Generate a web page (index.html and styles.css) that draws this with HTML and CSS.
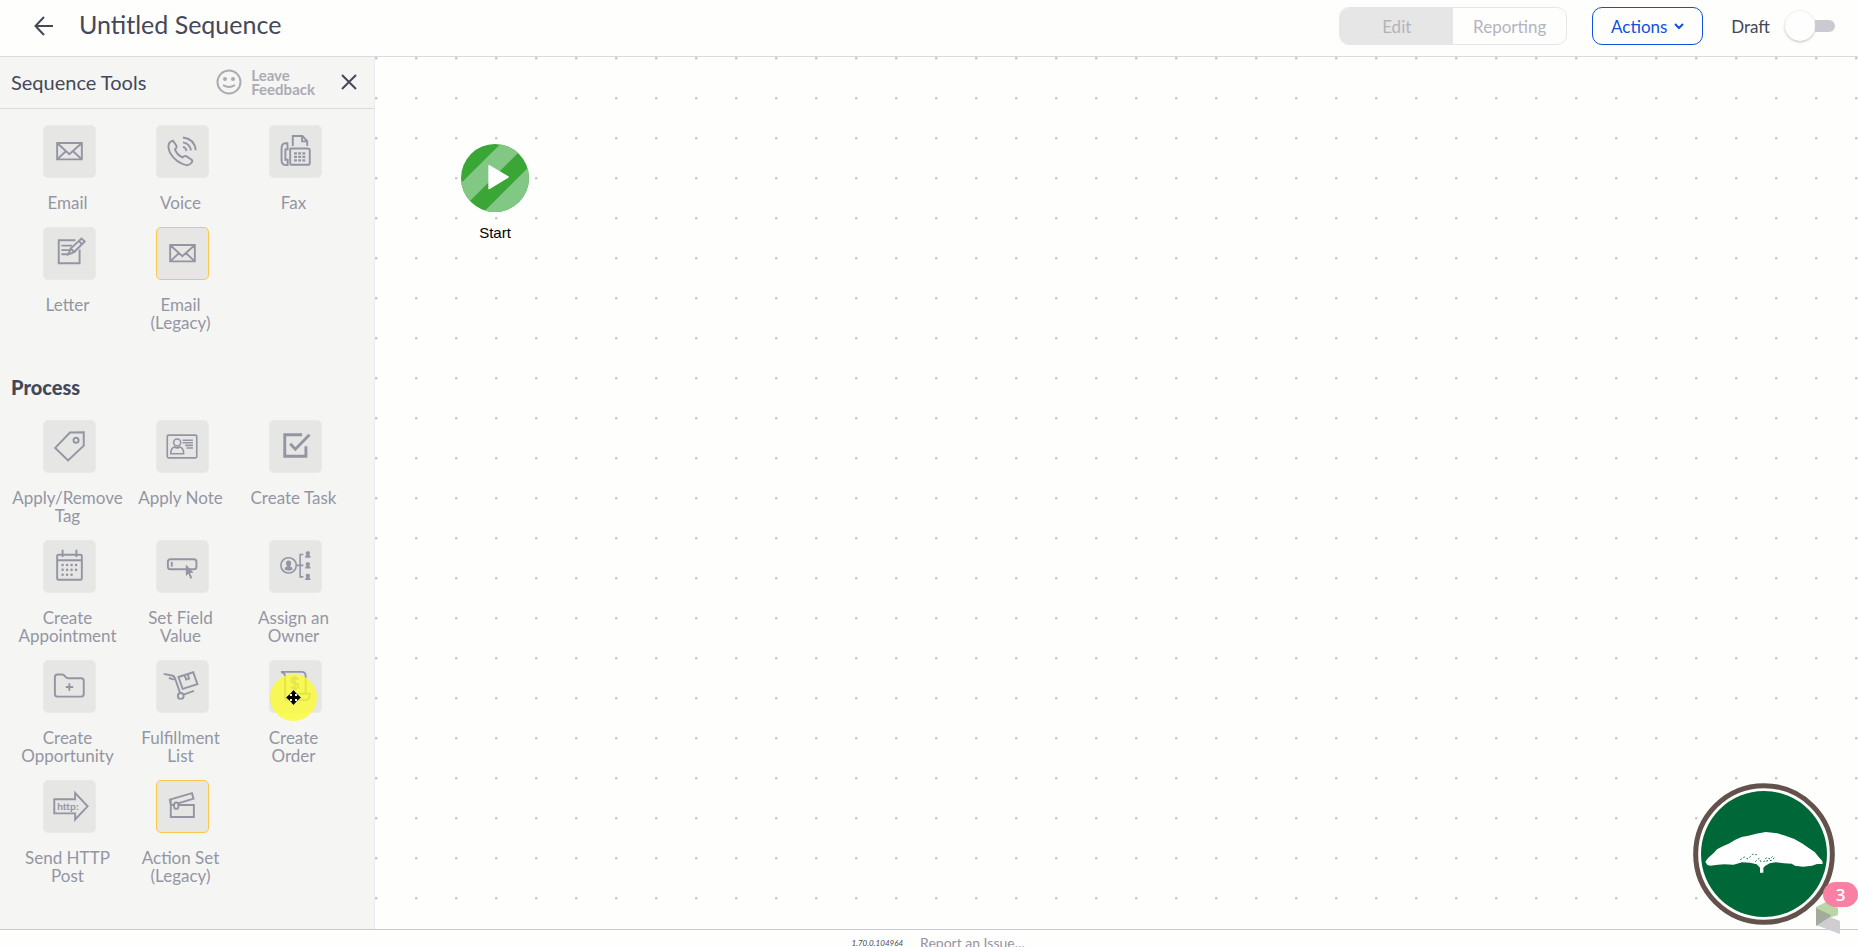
FILE: index.html
```html
<!DOCTYPE html>
<html lang="en">
<head>
    <meta charset="UTF-8">
    <meta name="viewport" content="width=device-width, initial-scale=1.0">
    <title>Untitled Sequence</title>
    <link rel="stylesheet" href="styles.css">
</head>
<body>
    <header class="topbar">
        <button type="button" class="icon-button" aria-label="Back">
            <svg width="20" height="20" viewBox="0 0 20 20"><path d="M19 10H2M10 1L1.500 10L10 19"/></svg>
        </button>
        <h1 class="title">Untitled Sequence</h1>
        <div class="mode-switch">
            <button type="button" class="mode active" disabled>Edit</button>
            <button type="button" class="mode" disabled>Reporting</button>
        </div>
        <button type="button" class="actions">Actions
            <svg width="10" height="7" viewBox="0 0 10 7"><path d="M1 1L5 5L9 1"/></svg>
        </button>
        <label class="publish" for="publish">Draft
            <input type="checkbox" id="publish" class="toggle">
        </label>
    </header>

    <main class="workspace">
        <aside class="sidebar">
            <div class="tools-header">
                <h2 class="tools-title">Sequence Tools</h2>
                <a href="#" class="feedback">
                    <svg width="26" height="26" viewBox="0 0 26 26">
                        <circle cx="13" cy="13" r="11.500"/>
                        <path d="M7 16Q13 20 19 16"/>
                        <circle class="fill" cx="9" cy="10" r="2"/>
                        <circle class="fill" cx="17" cy="10" r="2"/>
                    </svg>
                    <span>Leave<br>Feedback</span>
                </a>
                <button type="button" class="icon-button" aria-label="Close">
                    <svg width="16" height="16" viewBox="0 0 16 16"><path d="M1 1L15 15M15 1L1 15"/></svg>
                </button>
            </div>

            <div class="tools">
                <button type="button" class="tool">
                    <span class="tile">
                        <svg viewBox="0 0 159 156"><path d="M41 53H118V104H41ZM41 53L79 88L118 53M41 104L69 78M118 104L90 78"/></svg>
                    </span>
                    <span class="tool-name">Email</span>
                </button>
                <button type="button" class="tool">
                    <span class="tile">
                        <svg viewBox="0 0 159 156">
                            <path d="M50 46L61 62Q63 67 56 73Q62 90 79 98Q86 92 91 94L108 105Q112 109 108 114Q101 124 91 122Q60 115 42 86Q33 68 37 56Q41 47 50 46Z"/>
                            <path d="M81 36Q116 40 121 75M81 51Q102 54 106 76M81 65Q90 66 92 78"/>
                        </svg>
                    </span>
                    <span class="tool-name">Voice</span>
                </button>
                <button type="button" class="tool">
                    <span class="tile">
                        <svg viewBox="0 0 159 156">
                            <path d="M71 62V31H101L116 47V62M100 32V48H115"/>
                            <path d="M62 70H118Q124 70 124 76V115Q124 121 118 121H67Q63 121 63 116V70"/>
                            <path d="M54 54H48Q36 55 36 70V106Q36 121 48 122H55V105H48V73H55Z"/>
                            <path class="keys" d="M75 85H111M75 96H111M75 107H111"/>
                        </svg>
                    </span>
                    <span class="tool-name">Fax</span>
                </button>
                <button type="button" class="tool">
                    <span class="tile">
                        <svg viewBox="0 0 159 156">
                            <path d="M98 38H46V110H111V67M54 55H87M54 69H80M54 82H76"/>
                            <path d="M76 82L83 64L117 33L127 42L94 75ZM108 40L118 50M83 64L94 75"/>
                        </svg>
                    </span>
                    <span class="tool-name">Letter</span>
                </button>
                <button type="button" class="tool">
                    <span class="tile legacy">
                        <svg viewBox="0 0 159 156"><path d="M41 53H118V104H41ZM41 53L79 88L118 53M41 104L69 78M118 104L90 78"/></svg>
                    </span>
                    <span class="tool-name">Email<br>(Legacy)</span>
                </button>
            </div>

            <h3 class="section-title">Process</h3>
            <div class="tools">
                <button type="button" class="tool">
                    <span class="tile">
                        <svg viewBox="0 0 159 156"><path d="M81 36L124 35V77L75 123L35 84Z"/><circle cx="100" cy="60" r="8"/></svg>
                    </span>
                    <span class="tool-name">Apply/Remove<br>Tag</span>
                </button>
                <button type="button" class="tool">
                    <span class="tile">
                        <svg viewBox="0 0 159 156" class="thin">
                            <rect x="32" y="44" width="92" height="71" rx="4"/>
                            <circle cx="63" cy="67" r="11"/>
                            <path d="M43 102Q43 84 54 81Q63 87 72 81Q83 84 83 102ZM80 60H112M80 68H112M88 76H112M92 84H112"/>
                        </svg>
                    </span>
                    <span class="tool-name">Apply Note</span>
                </button>
                <button type="button" class="tool">
                    <span class="tile">
                        <svg viewBox="0 0 159 156" class="thick"><path d="M100 43H46V110H112V79M63 71L79 88L123 43"/></svg>
                    </span>
                    <span class="tool-name">Create Task</span>
                </button>
                <button type="button" class="tool">
                    <span class="tile">
                        <svg viewBox="0 0 159 156">
                            <rect x="41" y="43" width="77" height="78" rx="4"/>
                            <path d="M41 60H118M58 27V50M101 27V50"/>
                            <path class="dots" d="M58 75H102M58 90H102M58 105H88"/>
                        </svg>
                    </span>
                    <span class="tool-name">Create<br>Appointment</span>
                </button>
                <button type="button" class="tool">
                    <span class="tile">
                        <svg viewBox="0 0 159 156">
                            <rect x="34" y="57" width="89" height="31" rx="8"/>
                            <path d="M46 65V80"/>
                            <path class="fill" d="M90 73V109L98 102L104 118L110 115L103 100L114 99Z"/>
                        </svg>
                    </span>
                    <span class="tool-name">Set Field<br>Value</span>
                </button>
                <button type="button" class="tool">
                    <span class="tile">
                        <svg viewBox="0 0 159 156" class="thin">
                            <circle cx="58" cy="76" r="24"/>
                            <path d="M82 76H104M104 42H94V112H104"/>
                            <path class="fill" d="M58 61C51 61 50 66 50 70Q50 75 54 79Q46 81 45 89Q58 96 71 89Q70 81 62 79Q66 75 66 70C66 66 65 61 58 61Z"/>
                            <path class="fill" d="M118 32a6 6 0 0 1 4 11l4 4v5h-16v-5l4-4a6 6 0 0 1 4-11zM118 66a6 6 0 0 1 4 11l4 4v5h-16v-5l4-4a6 6 0 0 1 4-11zM118 102a6 6 0 0 1 4 11l4 4v5h-16v-5l4-4a6 6 0 0 1 4-11z"/>
                        </svg>
                    </span>
                    <span class="tool-name">Assign an<br>Owner</span>
                </button>
                <button type="button" class="tool">
                    <span class="tile">
                        <svg viewBox="0 0 159 156"><path d="M34 50Q34 42 42 42H57Q61 42 64 46L69 51Q72 54 77 54H116Q124 54 124 62V102Q124 111 116 111H42Q34 111 34 102ZM68 81H91M79 69V93"/></svg>
                    </span>
                    <span class="tool-name">Create<br>Opportunity</span>
                </button>
                <button type="button" class="tool">
                    <span class="tile">
                        <svg viewBox="0 0 159 156">
                            <path d="M21 40L49 46Q54 48 56 53L72 100M37 53L54 58M83 105L115 93"/>
                            <circle cx="74" cy="109" r="9"/>
                            <path d="M67 50L113 35L126 72L80 87ZM86 45L91 58L100 55L96 41"/>
                        </svg>
                    </span>
                    <span class="tool-name">Fulfillment<br>List</span>
                </button>
                <button type="button" class="tool">
                    <span class="tile">
                        <svg viewBox="0 0 159 156">
                            <path d="M34 34H99Q111 34 111 46V101M36 35Q47 37 47 48V112Q47 122 58 122H112Q124 122 124 102H79V109Q79 121 68 121"/>
                            <path d="M88 58Q84 52 77 52Q67 53 67 60Q67 67 77 69Q88 71 88 78Q87 86 77 86Q69 86 66 80M77 47V91"/>
                        </svg>
                        <span class="pointer">
                            <svg width="17" height="17" viewBox="0 0 17 17"><path d="M8.500 1L12 5H10V7H12V5L16 8.500L12 12V10H10V12H12L8.500 16L5 12H7V10H5V12L1 8.500L5 5V7H7V5H5Z"/></svg>
                        </span>
                    </span>
                    <span class="tool-name">Create<br>Order</span>
                </button>
                <button type="button" class="tool">
                    <span class="tile">
                        <svg viewBox="0 0 159 156"><path d="M32 57H97V37L136 79L97 120V101H32Z"/><text x="41" y="89">http:</text></svg>
                    </span>
                    <span class="tool-name">Send HTTP<br>Post</span>
                </button>
                <button type="button" class="tool">
                    <span class="tile legacy">
                        <svg viewBox="0 0 159 156">
                            <path d="M68 75H115V112H43V58M53 75H43L40 58L109 38L114 55L66 70"/>
                            <ellipse cx="60" cy="77" rx="7" ry="10"/>
                        </svg>
                    </span>
                    <span class="tool-name">Action Set<br>(Legacy)</span>
                </button>
            </div>
        </aside>

        <section class="canvas">
            <div class="node">
                <svg width="68" height="68" viewBox="0 0 204 204">
                    <clipPath id="disc"><circle cx="102" cy="102" r="102"/></clipPath>
                    <g clip-path="url(#disc)">
                        <path fill="#39a635" d="M0 0H204V204H0Z"/>
                        <path fill="#83c785" d="M118 0H198L0 198V118ZM272 0V272H0Z"/>
                    </g>
                    <path fill="#fff" stroke="#fff" stroke-width="4" stroke-linejoin="round" d="M84 65L142 99L84 134Z"/>
                </svg>
                <span>Start</span>
            </div>
            <div class="brand">
                <svg width="142" height="142" viewBox="0 0 426 426">
                    <circle cx="213" cy="213" r="205" fill="#fff" stroke="#62524b" stroke-width="15"/>
                    <circle cx="213" cy="213" r="189" fill="#006838"/>
                    <path fill="#fff" d="M37 236L46 224L63 209L72 199L91 189L107 182L127 170L146 162L166 158L190 152L218 147L253 151L277 158L304 168L329 182L346 194L365 207L377 222L388 234L389 243L372 243L357 248L330 251L306 248L296 242L273 241L248 238L230 241L216 249L211 255V269H201V254L191 244L171 239L147 238L132 242L121 245L94 244L75 245L52 248L43 246Z"/>
                    <path fill="none" stroke="#006838" stroke-width="3" stroke-dasharray="5 6" d="M142 230L154 222L165 228L178 214L191 215M187 236L198 226L205 238M212 237L220 224L232 228L241 218M220 234L236 232L248 221"/>
                </svg>
            </div>
            <div class="help">
                <svg width="24" height="32" viewBox="0 0 24 32">
                    <path fill="#b8d7a5" d="M0 5L10 0L22 6V13L13 16L0 9Z"/>
                    <path fill="#ceced0" d="M0 23L14 15L24 19V32Z"/>
                    <path fill="#a1ad9a" d="M0 6L15 13L14 15L0 24Z"/>
                </svg>
                <span class="count">3</span>
            </div>
        </section>
    </main>

    <footer class="footer">
        <span class="version">1.70.0.104964</span>
        <a href="#" class="report">Report an Issue...</a>
    </footer>
</body>
</html>
```
FILE: styles.css
```css
* {
    box-sizing: border-box;
}
body {
    margin: 0;
    height: 100vh;
    display: flex;
    flex-direction: column;
    overflow: hidden;
    background-color: #fefefd;
    color: #444859;
    font-family: Lato, "Liberation Sans", sans-serif;
    font-size: 17px;
}
button {
    font: inherit;
    color: inherit;
    background: none;
    border: 0;
    padding: 0;
}
a {
    color: inherit;
    text-decoration: none;
}
svg {
    display: block;
    fill: none;
    stroke: currentColor;
    stroke-width: 2;
}
h1, h2, h3 {
    margin: 0;
    font-weight: 400;
}

/* top bar */
.topbar {
    flex: none;
    display: flex;
    align-items: center;
    height: 57px;
    padding: 0 23px 4px 34px;
    border-bottom: 1px solid #dadae2;
}
.title {
    margin: 0 auto 0 25px;
    padding-bottom: 4px;
    font-size: 25px;
    line-height: 30px;
}
.mode-switch {
    display: flex;
    width: 228px;
    height: 38px;
    border: 1px solid #e6e6e8;
    border-radius: 10px;
    overflow: hidden;
}
.mode {
    flex: 1;
    color: #b4b4bd;
}
.mode.active {
    background-color: #e6e6e6;
}
.actions {
    display: flex;
    align-items: center;
    justify-content: center;
    gap: 7px;
    width: 111px;
    height: 38px;
    margin: 0 28px 0 25px;
    border: 1px solid #1150dc;
    border-radius: 10px;
    color: #1150dc;
}
.publish {
    display: flex;
    align-items: center;
    gap: 15px;
}
.toggle {
    appearance: none;
    display: flex;
    align-items: center;
    margin: 0;
}
.toggle::before {
    content: "";
    width: 30px;
    height: 30px;
    border-radius: 50%;
    background-color: #fefefe;
    box-shadow: 0 1px 3px rgba(0,0,0,0.25);
}
.toggle::after {
    content: "";
    width: 20px;
    height: 12px;
    border-radius: 0 6px 6px 0;
    background-color: #cacad2;
}

.workspace {
    flex: 1;
    min-height: 0;
    display: flex;
}

/* sidebar */
.sidebar {
    flex: none;
    width: 375px;
    overflow: hidden;
    background-color: #f5f5f4;
    border-right: 1px solid #ebebee;
}
.tools-header {
    display: flex;
    align-items: center;
    height: 52px;
    margin-bottom: 16px;
    padding: 0 17px 1px 11px;
    border-bottom: 1px solid #dadae2;
}
.tools-title {
    flex: 1;
    font-size: 20px;
}
.feedback {
    display: flex;
    align-items: center;
    gap: 9px;
    margin-right: 26px;
    color: #abacb3;
    font-size: 15px;
    font-weight: 700;
    line-height: 14px;
}
.tools {
    display: grid;
    grid-template-columns: repeat(3, 1fr);
    row-gap: 15px;
    margin: 0 24px 0 11px;
}
.tool {
    display: flex;
    flex-direction: column;
    align-items: center;
    gap: 17px;
    color: #9495a3;
    font-size: 17px;
    line-height: 18px;
}
.tile {
    position: relative;
    width: 53px;
    height: 53px;
    margin: 0 0 -1px 4px;
    border: 1px solid #e9e9ed;
    border-radius: 5px;
    background-color: #e6e6e5;
}
.tile.legacy {
    border-color: #fac84a;
}
.tile svg {
    stroke-width: 6;
}
.tile .thin {
    stroke-width: 5;
}
.tile .thick {
    stroke-width: 9;
}
.tile .keys {
    stroke-width: 7;
    stroke-dasharray: 9 4;
}
.tile .dots {
    stroke-width: 8;
    stroke-dasharray: 0 14;
    stroke-linecap: round;
}
.tile .fill,
.fill,
.tile text {
    fill: currentColor;
    stroke: none;
}
.tile text {
    font-size: 32px;
    font-weight: 700;
}
.tool-name {
    white-space: nowrap;
}
.section-title {
    margin: 44px 11px 22px;
    font-size: 20px;
    font-weight: 900;
    line-height: 22px;
}

/* highlighted mouse pointer over a tile */
.pointer {
    position: absolute;
    top: 13px;
    left: 0;
    display: grid;
    place-items: center;
    width: 47px;
    height: 47px;
    border-radius: 50%;
    background-color: rgba(251,251,45,0.78);
}
.pointer svg {
    fill: #000;
    stroke: #fff;
    stroke-width: 1;
    paint-order: stroke;
}

/* canvas */
.canvas {
    flex: 1;
    position: relative;
    background: radial-gradient(circle at 1px 1px, #c9c9cc 1px, transparent 2px) 0 0 / 40px 40px;
}
.canvas svg {
    stroke: none;
}
.node {
    position: absolute;
    top: 87px;
    left: 86px;
    display: flex;
    flex-direction: column;
    align-items: center;
    gap: 12px;
    color: #000;
    font-family: "Liberation Sans", Arial, sans-serif;
    font-size: 15px;
    line-height: 18px;
}
.brand {
    position: absolute;
    right: 23px;
    bottom: 4px;
}
.help {
    position: absolute;
    right: 18px;
    bottom: -5px;
}
.count {
    position: absolute;
    right: -18px;
    bottom: 27px;
    width: 35px;
    border-radius: 13px;
    background-color: #f780a3;
    color: #fff;
    font-family: "Open Sans", sans-serif;
    font-weight: 600;
    line-height: 25px;
    text-align: center;
}

.footer {
    flex: none;
    display: flex;
    justify-content: center;
    align-items: center;
    gap: 17px;
    height: 18px;
    padding: 8px 0 0 18px;
    overflow: hidden;
    border-top: 1px solid #c9c9cf;
    font-size: 14px;
    white-space: nowrap;
}
.version {
    font-size: 8px;
    font-style: italic;
}
.report {
    color: #9495a3;
}
```
